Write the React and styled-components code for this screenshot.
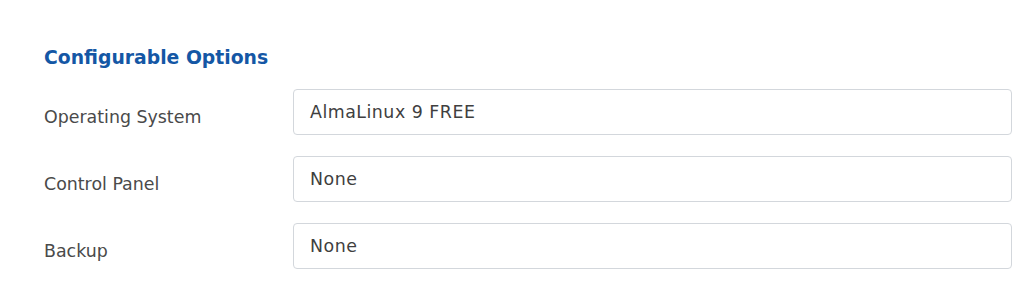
import React from "react";
import styled, { createGlobalStyle } from "styled-components";

const Global = createGlobalStyle`
  html, body { margin: 0; padding: 0; background: #fff; }
  body { font-family: "DejaVu Sans", "Noto Sans", sans-serif; }
`;

const Panel = styled.section`
  padding: 45px 23px 20px 44px;
`;

const Heading = styled.h3`
  margin: 0 0 18px 0;
  font-size: 18.8px;
  line-height: 26px;
  font-weight: 700;
  color: #1457a5;
`;

const Rows = styled.div`
  display: flex;
  flex-direction: column;
  gap: 21px;
`;

const Row = styled.div`
  display: grid;
  grid-template-columns: 249px 1fr;
  align-items: center;
`;

const Label = styled.label`
  font-size: 17.4px;
  color: #4a4a4a;
  padding-top: ${(p) => p.$offset || 0}px;
`;

const Field = styled.div`
  height: 44px;
  box-sizing: content-box;
  border: 1px solid #d3d7dc;
  border-radius: 4px;
  display: flex;
  align-items: center;
  padding: 0 16px;
  font-size: 17.4px;
  letter-spacing: 0.5px;
  color: #3f3f3f;
`;

const options = [
  { label: "Operating System", value: "AlmaLinux 9 FREE" },
  { label: "Control Panel", value: "None" },
  { label: "Backup", value: "None" },
];

export default function App() {
  return (
    <>
      <Global />
      <Panel>
        <Heading>Configurable Options</Heading>
        <Rows>
          {options.map((o) => (
            <Row key={o.label}>
              <Label $offset={9}>{o.label}</Label>
              <Field>{o.value}</Field>
            </Row>
          ))}
        </Rows>
      </Panel>
    </>
  );
}
